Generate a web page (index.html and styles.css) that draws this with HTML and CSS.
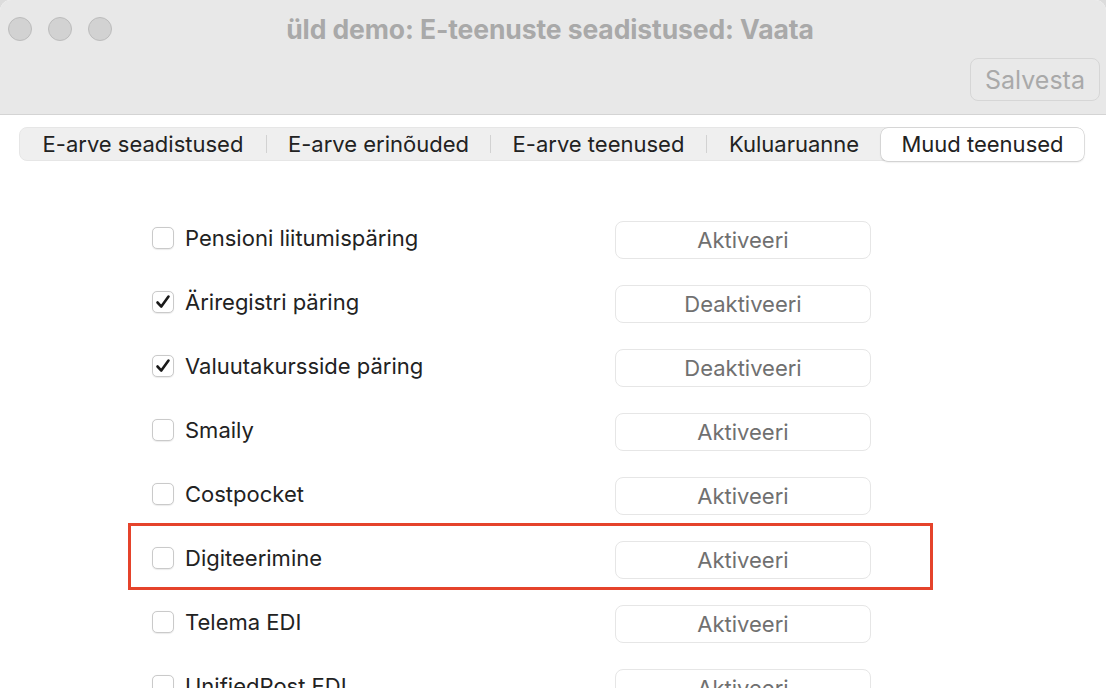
FILE: index.html
```html
<!DOCTYPE html>
<html lang="et">
<head>
<meta charset="utf-8">
<title>üld demo: E-teenuste seadistused: Vaata</title>
<link rel="stylesheet" href="styles.css">
</head>
<body>
<div class="window">
  <header class="toolbar">
    <div class="titlebar">
      <div class="lights">
        <span class="light"></span><span class="light"></span><span class="light"></span>
      </div>
      <div class="title">üld demo: E-teenuste seadistused: Vaata</div>
    </div>
    <div class="actions">
      <button class="save">Salvesta</button>
    </div>
  </header>
  <main class="content">
    <nav class="tabs">
      <div class="tab">E-arve seadistused</div>
      <div class="sep"></div>
      <div class="tab">E-arve erinõuded</div>
      <div class="sep"></div>
      <div class="tab">E-arve teenused</div>
      <div class="sep"></div>
      <div class="tab">Kuluaruanne</div>
      <div class="tab active">Muud teenused</div>
    </nav>
    <div class="list">
      <div class="row"><label class="item"><span class="cb"></span>Pensioni liitumispäring</label><button class="btn">Aktiveeri</button></div>
      <div class="row"><label class="item"><span class="cb checked"><svg viewBox="0 0 22 22" width="22" height="22"><path d="M5.5 11.5 L9.3 15.6 L16.5 5.6" fill="none" stroke="#1a1a1a" stroke-width="2.6" stroke-linecap="round" stroke-linejoin="round"/></svg></span>Äriregistri päring</label><button class="btn">Deaktiveeri</button></div>
      <div class="row"><label class="item"><span class="cb checked"><svg viewBox="0 0 22 22" width="22" height="22"><path d="M5.5 11.5 L9.3 15.6 L16.5 5.6" fill="none" stroke="#1a1a1a" stroke-width="2.6" stroke-linecap="round" stroke-linejoin="round"/></svg></span>Valuutakursside päring</label><button class="btn">Deaktiveeri</button></div>
      <div class="row"><label class="item"><span class="cb"></span>Smaily</label><button class="btn">Aktiveeri</button></div>
      <div class="row"><label class="item"><span class="cb"></span>Costpocket</label><button class="btn">Aktiveeri</button></div>
      <div class="row highlighted"><label class="item"><span class="cb"></span>Digiteerimine</label><button class="btn">Aktiveeri</button><span class="mark"></span></div>
      <div class="row"><label class="item"><span class="cb"></span>Telema EDI</label><button class="btn">Aktiveeri</button></div>
      <div class="row"><label class="item"><span class="cb"></span>UnifiedPost EDI</label><button class="btn">Aktiveeri</button></div>
    </div>
  </main>
</div>
</body>
</html>
```
FILE: styles.css
```css
* { box-sizing: border-box; }
html, body { margin: 0; padding: 0; }
body {
  width: 1106px;
  height: 688px;
  overflow: hidden;
  background: #dcdcdc;
  font-family: Inter, "Liberation Sans", Arial, sans-serif;
}
.window {
  width: 1106px;
  height: 688px;
  background: #fff;
  border-radius: 11px 11px 0 0;
  overflow: hidden;
  display: flex;
  flex-direction: column;
}
.toolbar {
  height: 115px;
  flex: none;
  background: #e8e8e8;
  border-bottom: 1px solid #d4d4d4;
  display: flex;
  flex-direction: column;
}
.titlebar {
  height: 58px;
  display: flex;
  align-items: center;
  padding-left: 8px;
}
.lights { display: flex; gap: 16px; }
.light {
  width: 24px; height: 24px;
  border-radius: 50%;
  background: #d2d2d2;
  border: 1px solid #bcbcbc;
}
.title {
  flex: 1;
  text-align: center;
  font-weight: 700;
  font-size: 26.5px;
  color: #a9a9a9;
  margin-left: -118px;
  letter-spacing: -0.1px;
}
.actions {
  display: flex;
  justify-content: flex-end;
  padding-right: 6px;
}
.save {
  width: 130px;
  height: 43px;
  font-family: inherit;
  font-size: 25px;
  color: #a9a9a9;
  background: #e9e9e9;
  border: 1px solid #d6d6d6;
  border-radius: 8px;
}
.content { flex: 1; }
.tabs {
  margin: 12px 22px 0 19px;
  height: 34px;
  background: #efefef;
  border-radius: 8px;
  border: 1px solid #e6e6e6;
  display: flex;
  align-items: center;
  font-size: 22px;
  color: #222;
}
.tab {
  height: 100%;
  display: flex;
  align-items: center;
  justify-content: center;
}
.tab:nth-child(1) { width: 246px; }
.tab:nth-child(3) { width: 223px; }
.tab:nth-child(5) { width: 215px; }
.tab:nth-child(7) { width: 174px; }
.sep {
  width: 1px; height: 18px;
  background: #d2d2d2;
}
.tab.active {
  flex: 1;
  height: 33px;
  background: #fff;
  border-radius: 7px;
  box-shadow: 0 0 0 0.5px #c8c8c8, 0 1px 2px rgba(0,0,0,0.18);
  margin-right: -1px;
}
.list {
  padding: 45px 0 0 152px;
  display: flex;
  flex-direction: column;
}
.row {
  height: 64px;
  display: grid;
  grid-template-columns: 463px 256px;
  align-items: center;
  position: relative;
}
.item {
  display: flex;
  align-items: center;
  font-size: 22px;
  color: #222;
  margin-top: -1px;
}
.cb {
  width: 22px; height: 22px;
  border: 1px solid #cacaca;
  border-radius: 5px;
  background: #fff;
  box-shadow: 0 0.5px 1px rgba(0,0,0,0.08);
  margin-right: 11px;
  display: flex;
  flex: none;
}
.cb svg { margin: -1px; }
.btn {
  height: 38px;
  font-family: inherit;
  font-size: 22px;
  color: #707070;
  background: #fff;
  border: 1px solid #e6e6e6;
  border-radius: 8px;
  margin-top: 3px;
}
.mark {
  position: absolute;
  left: -24px;
  top: -3px;
  width: 805px;
  height: 67px;
  border: 3px solid #e5432b;
  pointer-events: none;
}
```
